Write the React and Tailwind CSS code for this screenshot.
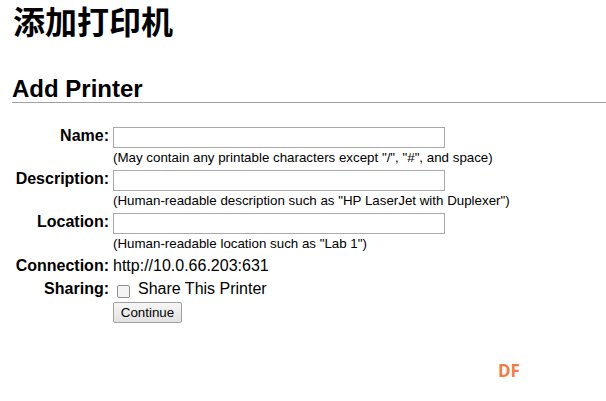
import React from "react";

function Field({ label, help }) {
  return (
    <>
      <div className="flex h-[21px] items-center justify-end pb-[3px] text-[16px] font-bold leading-[18px]">{label}</div>
      <div className="flex h-[21px] items-center">
        <input type="text" className="h-[21px] w-[332px] border border-[#a9a9a9] bg-white px-[2px] text-[13px] outline-none" />
      </div>
      <div />
      <div className="mt-[2px] mb-[5px] h-[15px] whitespace-nowrap text-[13.33px] leading-[15px]">{help}</div>
    </>
  );
}

export default function App() {
  return (
    <div className="relative h-[401px] w-[606px] overflow-hidden bg-white text-black" style={{ fontFamily: '"Liberation Sans", Arial, "Noto Sans CJK SC", sans-serif' }}>
      <h1 className="pl-[13px] text-[32px] font-bold leading-[40px]" style={{ fontFamily: '"Noto Sans CJK SC", "Noto Sans CJK JP", serif' }}>
        添加打印机
      </h1>
      <h2 className="ml-[12px] mt-[35px] border-b border-[#a0a0a0] text-[24px] font-bold leading-[27px]">Add Printer</h2>
      <div className="mt-[24px] grid grid-cols-[97px_1fr] gap-x-[4px] pl-[12px]">
        <Field label="Name:" help={'(May contain any printable characters except "/", "#", and space)'} />
        <Field label="Description:" help={'(Human-readable description such as "HP LaserJet with Duplexer")'} />
        <Field label="Location:" help={'(Human-readable location such as "Lab 1")'} />
        <div className="mt-[1px] h-[18px] text-right text-[16px] font-bold leading-[18px]">Connection:</div>
        <div className="mt-[1px] h-[18px] text-[16px] leading-[18px]">http://10.0.66.203:631</div>
        <div className="mt-[4px] flex h-[22px] items-center justify-end pb-[2px] text-[16px] font-bold leading-[18px]">Sharing:</div>
        <div className="mt-[4px] flex h-[22px] items-center text-[16px] leading-[18px]">
          <span className="ml-[4px] mr-[8px] mt-[2px] inline-block h-[13px] w-[13px] rounded-[2px] border border-[#8f8f8f] bg-[#f4f4f4]" />
          <span className="pb-[2px]">Share This Printer</span>
        </div>
        <div />
        <div className="mt-[-1px]">
          <button className="h-[21px] w-[69px] rounded-[2px] border border-[#a0a0a0] bg-gradient-to-b from-[#f6f6f6] to-[#e2e2e2] text-[13.33px] leading-[19px]">
            Continue
          </button>
        </div>
      </div>
      <div className="absolute left-[498px] top-[361px] text-[17px] font-bold leading-[20px] text-[#ef7d45]" style={{ fontFamily: '"Open Sans", "Liberation Sans", sans-serif' }}>
        DF
      </div>
    </div>
  );
}
